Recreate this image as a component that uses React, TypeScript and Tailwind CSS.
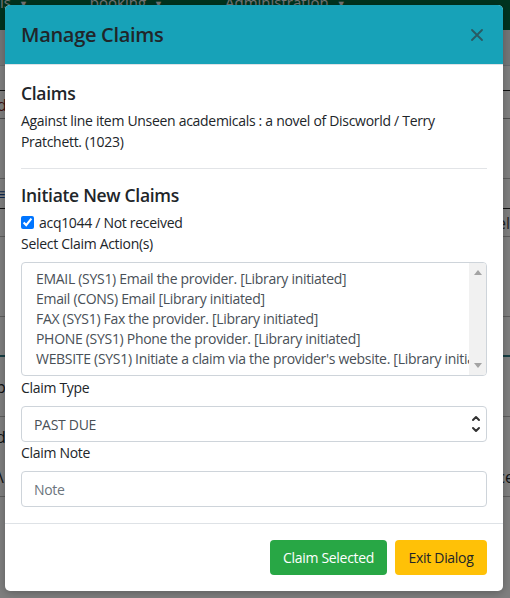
import { useState } from "react";

const font = "font-['Segoe_UI','Open_Sans',sans-serif]";

const claimActions = [
    "EMAIL (SYS1) Email the provider. [Library initiated]",
    "Email (CONS) Email [Library initiated]",
    "FAX (SYS1) Fax the provider. [Library initiated]",
    "PHONE (SYS1) Phone the provider. [Library initiated]",
    "WEBSITE (SYS1) Initiate a claim via the provider's website. [Library initiated]",
];

const Caret = () => <span className="ml-2 text-[9px] align-middle">▼</span>;

// page that sits behind the backdrop
const BackPage = () => (
    <div className="flex flex-col">
        <nav className="h-[30px] bg-[#00663e] text-[#e8e8e8] text-[15px] flex gap-[62px] -mt-[9px] pl-0">
            <span>ls<Caret /></span>
            <span>booking<Caret /></span>
            <span>Administration<Caret /></span>
        </nav>
        <div className="h-[9px] bg-[#00663e]" />
        <div className="h-[36px] bg-[#e9ecef] border-b border-[#cfd4da]" />
        <div className="h-[25px] border-b border-[#222]" />
        <div className="h-[28px] border-b border-[#999] text-[#7a1f1f] text-[16px] leading-[28px] pl-0">
            <span className="-ml-[3px]">d</span>
        </div>
        <div className="h-[60px] border-b border-[#bbb]" />
        <div className="h-[30px] border-b border-[#222] text-[#1b4f9c] text-[16px] leading-[30px]">
            <span className="-ml-[4px]">≡</span>
        </div>
        <div className="h-[28px] border-b border-[#bbb] text-right text-[16px] leading-[28px] pr-0 text-[#444]">
            el
        </div>
        <div className="h-[80px] border-b border-[#bbb]" />
        <div className="h-[40px] border-b-2 border-[#2a7c86]" />
        <div className="h-[60px] border-b border-[#bbb] text-[16px] leading-[60px]">
            <span className="-ml-[4px]">p</span>
        </div>
        <div className="h-[80px] border-b border-[#bbb] text-[16px] leading-[40px]">
            <div className="-ml-[4px]">d</div>
            <div className="flex justify-between">
                <span className="-ml-[2px]">\</span>
                <span className="-mr-[4px]">ce</span>
            </div>
        </div>
    </div>
);

const Chevrons = () => (
    <svg width="10" height="22" viewBox="0 0 10 22" fill="none" stroke="#333" strokeWidth="2" strokeLinecap="round" strokeLinejoin="round">
        <path d="M2 7 L5 4 L8 7" />
        <path d="M2 15 L5 18 L8 15" />
    </svg>
);

export default function App() {
    const [checked, setChecked] = useState(true);
    const [note, setNote] = useState("");

    return (
        <div className={`relative h-[598px] w-[510px] overflow-hidden bg-white text-[#212529] ${font}`}>
            <BackPage />
            <div className="absolute inset-0 bg-black/50" />

            <div className="absolute left-[5px] top-[5px] w-[498px] bg-white rounded-[5px] overflow-hidden shadow-[0_2px_8px_rgba(0,0,0,0.25)]">
                <div className="h-[60px] bg-[#17a2b8] border-b border-[#dee2e6] flex items-center justify-between pl-4 pr-[19px]">
                    <h4 className="text-[20px] font-semibold leading-[1.5] tracking-[-0.3px] text-[#212529]">Manage Claims</h4>
                    <button className="w-[14px] h-[14px] flex items-center justify-center">
                        <svg width="12" height="12" viewBox="0 0 12 12" stroke="#2a5a63" strokeWidth="1.8" strokeLinecap="round">
                            <path d="M1 1 L11 11 M11 1 L1 11" />
                        </svg>
                    </button>
                </div>

                <div className="pt-[18px] px-4 pb-4 text-[14px] leading-[1.5] tracking-[-0.3px]">
                    <h5 className="text-[17.5px] font-semibold leading-[1.2] mb-[6px]">Claims</h5>
                    <p className="text-[#212529]">
                        Against line item Unseen academicals : a novel of Discworld / Terry Pratchett. (1023)
                    </p>
                    <hr className="mt-4 mb-4 border-t border-[#e2e4e7]" />

                    <h5 className="text-[17.5px] font-semibold leading-[1.2] mb-[6px]">Initiate New Claims</h5>
                    <label className="flex items-center gap-[5px]">
                        <input
                            type="checkbox"
                            checked={checked}
                            onChange={(e) => setChecked(e.target.checked)}
                            className="w-[13px] h-[13px] m-0 accent-[#0075ff]"
                        />
                        <span>acq1044 / Not received</span>
                    </label>
                    <div className="mb-2">Select Claim Action(s)</div>

                    <div className="h-[114px] border border-[#ced4da] rounded-[4px] flex overflow-hidden">
                        <div className="flex-1 min-w-0 pt-[6px] pl-[14px] text-[#495057] leading-[20px] overflow-hidden">
                            {claimActions.map((a) => (
                                <div key={a} className="whitespace-nowrap">{a}</div>
                            ))}
                        </div>
                        <div className="w-[17px] bg-[#f1f1f1] flex flex-col justify-between items-center py-[7px]">
                            <svg width="8" height="5" viewBox="0 0 8 5"><path d="M0 5 L4 0 L8 5 Z" fill="#a3a3a3" /></svg>
                            <svg width="8" height="5" viewBox="0 0 8 5"><path d="M0 0 L4 5 L8 0 Z" fill="#a3a3a3" /></svg>
                        </div>
                    </div>

                    <div className="mt-px mb-2">Claim Type</div>
                    <div className="h-[36px] border border-[#ced4da] rounded-[4px] flex items-center justify-between pl-3 pr-[5px] text-[#495057]">
                        <span>PAST DUE</span>
                        <Chevrons />
                    </div>

                    <div className="mb-2">Claim Note</div>
                    <input
                        value={note}
                        onChange={(e) => setNote(e.target.value)}
                        placeholder="Note"
                        className="block w-full h-[36px] border border-[#ced4da] rounded-[4px] px-3 text-[#495057] placeholder:text-[#6c757d] outline-none"
                    />
                </div>

                <div className="border-t border-[#dee2e6] p-4 flex justify-end gap-2 tracking-[-0.3px]">
                    <button className="w-[117px] h-[35px] rounded-[4px] bg-[#28a745] text-white text-[14px]">
                        Claim Selected
                    </button>
                    <button className="w-[92px] h-[35px] rounded-[4px] bg-[#ffc107] text-[#212529] text-[14px]">
                        Exit Dialog
                    </button>
                </div>
            </div>
        </div>
    );
}
